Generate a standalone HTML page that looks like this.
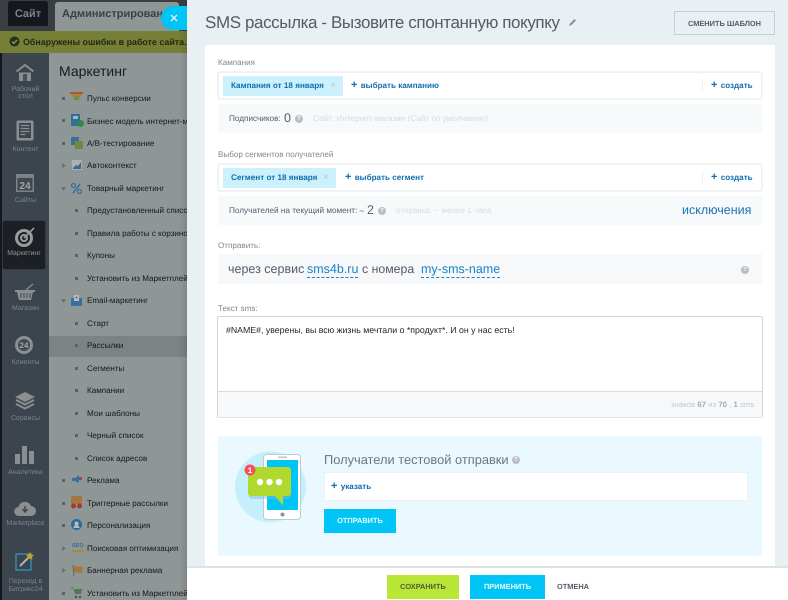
<!DOCTYPE html>
<html lang="ru"><head><meta charset="utf-8"><title>SMS</title>
<style>
html,body{margin:0;padding:0}
body{width:788px;height:600px;overflow:hidden;position:relative;background:#8f9696;font-family:"Liberation Sans","Noto Sans CJK SC",sans-serif;font-size:9px;color:#535c69;text-rendering:geometricPrecision}
.a,.a *{box-sizing:border-box}
.a{position:absolute;white-space:nowrap}
.m{position:absolute;left:87px;margin-top:1px;color:#14181c;font-size:8.1px;line-height:12px;white-space:nowrap;width:100px;overflow:hidden}
.b{position:absolute;width:3px;height:3px;background:#5c6263}
.s{position:absolute;left:2px;width:47px;text-align:center;color:#7d848a;font-size:7px;line-height:8px}
.lbl{color:#80868e;font-size:8.1px;line-height:11px}
.link{color:#0f6fb0;font-weight:bold;font-size:8.1px;line-height:11px}
.lnk2{color:#1681c9;border-bottom:1px dashed #1681c9;font-size:12.5px;line-height:15px}
.box{background:#fff;border:1px solid #eef0f1;border-radius:2px;box-shadow:0 0 0 1px #f3f4f5}
.soft{background:#f7fafb}
.tag{background:#ccf1fd;color:#0f6fb0;font-weight:bold;font-size:8.15px;line-height:19px}
.q{position:absolute;width:8px;height:8px;border-radius:50%;background:#b9bec3;color:#fff;font-size:6px;line-height:8px;text-align:center;font-weight:bold}
.btn{text-align:center;font-weight:bold;font-size:7.4px}
</style></head>
<body>
<!-- top background -->
<div class="a" style="left:0;top:0;width:187px;height:31px;background:#3b3e41"></div>
<div class="a" style="left:8px;top:1px;width:40px;height:25px;background:#14181e;border-radius:3px 3px 0 0;color:#7e8388;font-size:11px;font-weight:bold;line-height:26px;text-align:center">Сайт</div>
<div class="a" style="left:55px;top:2px;width:124px;height:29px;background:#8f9696;border-radius:3px 3px 0 0;color:#3b4044;font-size:11px;font-weight:bold;line-height:25px;padding-left:7px;overflow:hidden">Администрирование</div>
<div class="a" style="left:0;top:31px;width:187px;height:22px;background:#777f36"></div>
<svg class="a" style="left:9px;top:36px" width="11" height="11" viewBox="0 0 11 11"><circle cx="5.500" cy="5.500" r="5" fill="#23331a"/><path d="M3 5.600l1.800 1.800L8 4" fill="none" stroke="#8c9548" stroke-width="1.400"/></svg>
<div class="a" style="left:23px;top:36px;color:#1d2a10;font-size:8.900px;font-weight:bold;line-height:12px;width:164px;overflow:hidden">Обнаружены ошибки в работе сайта.</div>

<!-- sidebar -->
<div class="a" style="left:0;top:53px;width:2px;height:547px;background:#15171a"></div>
<div class="a" style="left:2px;top:53px;width:47px;height:547px;background:#3c444d"></div>
<div class="a" style="left:3px;top:221px;width:42px;height:48px;background:#1c2024;border-radius:2px;box-shadow:0 0 1px #111"></div>

<svg class="a" style="left:15px;top:63px" width="20" height="20" viewBox="0 0 20 20"><path d="M1.500 8.500L10 2l8.500 6.500" fill="none" stroke="#8b8f92" stroke-width="2"/><path d="M4 9.500h12V18H4z" fill="#8b8f92"/><path d="M8 11h4v7H8z" fill="#4b5158"/></svg>
<div class="s" style="top:86px">Рабочий<br><span style="position:relative;top:-1px">стол</span></div>
<svg class="a" style="left:16px;top:120px" width="18" height="21" viewBox="0 0 18 21"><rect x="0.500" y="0.500" width="17" height="20" rx="1.500" fill="#8b8f92"/><rect x="3" y="3" width="12" height="15" fill="#3c444d"/><path d="M4.500 5.500h9M4.500 8.500h9M4.500 11.500h9M4.500 14.500h5" stroke="#8b8f92" stroke-width="1.300"/></svg>
<div class="s" style="top:146px">Контент</div>
<svg class="a" style="left:16px;top:174px" width="18" height="18" viewBox="0 0 18 18"><rect width="18" height="18" fill="#7d8287"/><rect x="1.500" y="4" width="15" height="12.500" fill="#41484f"/><text x="9" y="15" text-anchor="middle" font-family="Liberation Sans" font-size="10" font-weight="bold" fill="#a3a7aa">24</text></svg>
<div class="s" style="top:197px">Сайты</div>
<svg class="a" style="left:14px;top:226px" width="22" height="22" viewBox="0 0 22 22"><circle cx="10" cy="12" r="9" fill="#9a9da0"/><circle cx="10" cy="12" r="6" fill="#1c2024"/><circle cx="10" cy="12" r="4" fill="#9a9da0"/><circle cx="10" cy="12" r="2" fill="#1c2024"/><path d="M10 12L20 2" stroke="#9a9da0" stroke-width="1.600"/></svg>
<div class="s" style="top:250px;left:3px;width:42px;color:#8f9498;font-size:6.900px">Маркетинг</div>
<svg class="a" style="left:14px;top:281px" width="22" height="20" viewBox="0 0 22 20"><path d="M1 9h20v2H1z" fill="#8b8f92"/><path d="M3 11h16l-2 8H5z" fill="#8b8f92"/><path d="M7 12v5M10 12v5M13 12v5M16 12v5" stroke="#3c444d" stroke-width="1"/><path d="M12 9l7-6" stroke="#8b8f92" stroke-width="1.300"/></svg>
<div class="s" style="top:305px">Магазин</div>
<svg class="a" style="left:15px;top:336px" width="18" height="18" viewBox="0 0 18 18"><circle cx="9" cy="9" r="9" fill="#8b8f92"/><circle cx="9" cy="9" r="6" fill="#41484f"/><text x="9" y="12" text-anchor="middle" font-family="Liberation Sans" font-size="8" font-weight="bold" fill="#a3a7aa">24</text></svg>
<div class="s" style="top:359px">Клиенты</div>
<svg class="a" style="left:15px;top:392px" width="20" height="18" viewBox="0 0 20 18"><path d="M10 0l10 5-10 5L0 5z" fill="#8b8f92"/><path d="M1 8l9 4.500L19 8M1 12l9 4.500L19 12" fill="none" stroke="#8b8f92" stroke-width="2"/></svg>
<div class="s" style="top:415px">Сервисы</div>
<svg class="a" style="left:14px;top:445px" width="21" height="20" viewBox="0 0 21 20"><rect x="1" y="9" width="5" height="10" fill="#8b8f92"/><rect x="8" y="1" width="5" height="18" fill="#8b8f92"/><rect x="15" y="6" width="5" height="13" fill="#8b8f92"/></svg>
<div class="s" style="top:469px">Аналитика</div>
<svg class="a" style="left:14px;top:500px" width="22" height="17" viewBox="0 0 22 17"><path d="M5 16a4.500 4.500 0 0 1-.5-9A6.500 6.500 0 0 1 17 6a5 5 0 0 1 0 10z" fill="#8b8f92"/><path d="M11 6v5M8.500 9l2.500 3 2.500-3" fill="none" stroke="#3c444d" stroke-width="1.500"/></svg>
<div class="s" style="top:520px">Marketplace</div>
<svg class="a" style="left:15px;top:551px" width="21" height="21" viewBox="0 0 21 21"><rect x="1" y="3" width="15" height="16" fill="none" stroke="#2b8bb0" stroke-width="1.500"/><path d="M5 15l9-9" stroke="#aeb1b2" stroke-width="2"/><path d="M15 1l1.300 2.500 2.700.5-2 2 .5 2.700-2.500-1.300-2.500 1.300.5-2.700-2-2 2.700-.5z" fill="#c8a22e"/></svg>
<div class="s" style="top:578px">Переход в<br>Битрикс24</div>

<!-- menu -->
<div class="a" style="left:59px;top:63px;color:#171b20;font-size:14px;line-height:17px">Маркетинг</div>
<div class="a" style="left:49px;top:336px;width:138px;height:21px;background:#7b8383"></div>

<i class="b" style="left:62px;top:97px"></i><div class="a" style="left:70px;top:92px;width:13px;height:10px"><svg width="13" height="10" viewBox="0 0 13 10"><path d="M0 0h13v2H0z" fill="#a8553a"/><path d="M1.500 2h10v2h-10z" fill="#a8853a"/><path d="M3 4h7v2H3z" fill="#7f9140"/><path d="M4.500 6h4v2h-4z" fill="#5f8a50"/></svg></div><div class="m" style="top:92px">Пульс конверсии</div>
<i class="b" style="left:62px;top:119px"></i><svg class="a" style="left:71px;top:114px" width="13" height="13" viewBox="0 0 13 13"><rect width="9" height="12" fill="#2f6f9a"/><rect x="2" y="2" width="5" height="3" fill="#9db7c4"/><circle cx="9.500" cy="9.500" r="3.500" fill="#2f8a4a"/></svg><div class="m" style="top:115px">Бизнес модель интернет-м</div>
<i class="b" style="left:62px;top:142px"></i><svg class="a" style="left:71px;top:137px" width="12" height="12" viewBox="0 0 12 12"><rect width="8" height="8" fill="#3a6f98"/><rect x="4" y="4" width="8" height="8" fill="#6f8a3e"/></svg><div class="m" style="top:137px">А/В-тестирование</div>
<svg class="a" style="left:62px;top:163px" width="4" height="5"><path d="M0 0l4 2.500L0 5z" fill="#6a7071"/></svg><svg class="a" style="left:72px;top:160px" width="10" height="10" viewBox="0 0 10 10"><rect width="10" height="10" fill="#aab0b4"/><path d="M1 8l3-3 2 1 3-4v7H1z" fill="#3f6a90"/></svg><div class="m" style="top:159px">Автоконтекст</div>
<svg class="a" style="left:61px;top:187px" width="5" height="4"><path d="M0 0h5L2.500 4z" fill="#6a7071"/></svg><svg class="a" style="left:71px;top:183px" width="11" height="11" viewBox="0 0 11 11"><circle cx="2.500" cy="2.500" r="2" fill="none" stroke="#36709e" stroke-width="1.300"/><circle cx="8.500" cy="8.500" r="2" fill="none" stroke="#36709e" stroke-width="1.300"/><path d="M9 1L2 10" stroke="#36709e" stroke-width="1.500"/></svg><div class="m" style="top:182px">Товарный маркетинг</div>

<i class="b" style="left:75px;top:209px"></i><div class="m" style="top:204px">Предустановленный списо</div>
<i class="b" style="left:75px;top:232px"></i><div class="m" style="top:227px">Правила работы с корзино</div>
<i class="b" style="left:75px;top:254px"></i><div class="m" style="top:249px">Купоны</div>
<i class="b" style="left:75px;top:277px"></i><div class="m" style="top:272px">Установить из Маркетплей</div>
<svg class="a" style="left:61px;top:299px" width="5" height="4"><path d="M0 0h5L2.500 4z" fill="#6a7071"/></svg><svg class="a" style="left:71px;top:295px" width="11" height="11" viewBox="0 0 11 11"><rect y="3" width="11" height="8" fill="#36709e"/><rect x="3" width="5" height="6" fill="#b7bcbc"/><path d="M4.500 2.500h2M5.500 1.500v2" stroke="#a84040"/></svg><div class="m" style="top:294px">Email-маркетинг</div>
<i class="b" style="left:75px;top:322px"></i><div class="m" style="top:317px">Старт</div>
<i class="b" style="left:75px;top:344px"></i><div class="m" style="top:339px">Рассылки</div>
<i class="b" style="left:75px;top:367px"></i><div class="m" style="top:362px">Сегменты</div>
<i class="b" style="left:75px;top:389px"></i><div class="m" style="top:384px">Кампании</div>
<i class="b" style="left:75px;top:412px"></i><div class="m" style="top:407px">Мои шаблоны</div>
<i class="b" style="left:75px;top:434px"></i><div class="m" style="top:429px">Черный список</div>
<i class="b" style="left:75px;top:457px"></i><div class="m" style="top:452px">Список адресов</div>
<i class="b" style="left:62px;top:479px"></i><svg class="a" style="left:71px;top:474px" width="11" height="12" viewBox="0 0 11 12"><path d="M1 4h3l4-3v8L4 7H1z" fill="#36709e"/><rect x="8" y="3" width="3" height="3" fill="#a04a3a"/></svg><div class="m" style="top:474px">Реклама</div>
<i class="b" style="left:62px;top:502px"></i><svg class="a" style="left:70px;top:496px" width="13" height="13" viewBox="0 0 13 13"><rect x="1" y="0" width="11" height="8" fill="#a5763f"/><circle cx="3.500" cy="10" r="2.500" fill="#a03c30"/><circle cx="9.500" cy="10" r="2.500" fill="#a03c30"/></svg><div class="m" style="top:497px">Триггерные рассылки</div>
<i class="b" style="left:62px;top:524px"></i><svg class="a" style="left:71px;top:519px" width="11" height="11" viewBox="0 0 11 11"><circle cx="5.500" cy="5.500" r="5.500" fill="#2f6a9a"/><circle cx="5.500" cy="4.500" r="2" fill="#b7bcbc"/><path d="M2.500 9a3 3 0 0 1 6 0z" fill="#b7bcbc"/></svg><div class="m" style="top:519px">Персонализация</div>
<svg class="a" style="left:62px;top:546px" width="4" height="5"><path d="M0 0l4 2.500L0 5z" fill="#6a7071"/></svg><div class="a" style="left:72px;top:543px;color:#2f6a9a;font-size:5.500px;font-weight:bold;line-height:7px;border-bottom:2px solid #a88a3a">SEO</div><div class="m" style="top:542px">Поисковая оптимизация</div>
<svg class="a" style="left:62px;top:568px" width="4" height="5"><path d="M0 0l4 2.500L0 5z" fill="#6a7071"/></svg><svg class="a" style="left:71px;top:565px" width="12" height="11" viewBox="0 0 12 11"><path d="M2 1l10 1-1 6-8-1z" fill="#a8783a"/><path d="M2 0l1 11" stroke="#5f6a6a"/></svg><div class="m" style="top:564px">Баннерная реклама</div>
<i class="b" style="left:62px;top:592px"></i><svg class="a" style="left:70px;top:587px" width="13" height="12" viewBox="0 0 13 12"><path d="M0 0h3l2 7h6l1-5H4z" fill="#4f7a50"/><circle cx="6" cy="10" r="1.200" fill="#4a5050"/><circle cx="10" cy="10" r="1.200" fill="#4a5050"/></svg><div class="m" style="top:587px">Установить из Маркетплей</div>

<!-- panel -->
<div class="a" style="left:187px;top:0;width:601px;height:600px;background:#e9f0f3;box-shadow:-3px 0 6px rgba(0,0,0,.12)"></div>
<!-- close -->
<div class="a" style="left:161px;top:6px;width:26px;height:24px;background:#00c4f5;border-radius:12px 0 0 12px;color:#fff;text-align:center"><svg style="position:absolute;left:9px;top:8px" width="8" height="8" viewBox="0 0 8 8"><path d="M1 1l6 6M7 1L1 7" stroke="#dff6fd" stroke-width="1.300"/></svg></div>

<div class="a" style="left:205px;top:12px;color:#535c69;font-size:17px;letter-spacing:-.4px;line-height:22px">SMS рассылка - Вызовите спонтанную покупку</div>
<svg class="a" style="left:568px;top:18px" width="9" height="9" viewBox="0 0 9 9"><path d="M1 8l1-2.500L6.500 1 8 2.500 3.500 7z" fill="#8a9096"/></svg>
<div class="a btn" style="left:674px;top:11px;width:101px;height:24px;border:1px solid #c6cdd3;line-height:23px;color:#535c69">СМЕНИТЬ ШАБЛОН</div>

<div class="a" style="left:205px;top:45px;width:570px;height:521px;background:#fff"></div>

<!-- campaign -->
<div class="a lbl" style="left:218px;top:57px">Кампания</div>
<div class="a box" style="left:218px;top:72px;width:544px;height:27px"></div>
<div class="a tag" style="left:223px;top:76px;width:120px;height:20px;padding-left:8px">Кампания от 18 января<span style="position:absolute;left:107px;top:0;color:#a9cfdc;font-weight:normal;font-size:10px">×</span></div>
<div class="a link" style="left:351px;top:80px"><span style="font-size:11px;line-height:11px">+</span> <span style="position:relative;left:1px">выбрать кампанию</span></div>
<div class="a" style="left:702px;top:79px;width:1px;height:13px;background:#eef0f1"></div>
<div class="a link" style="left:711px;top:80px"><span style="font-size:11px;line-height:11px">+</span> <span style="position:relative;left:1px">создать</span></div>
<div class="a soft" style="left:218px;top:104px;width:544px;height:29px"></div>
<div class="a" style="left:229px;top:113px;font-size:8.200px;line-height:12px;color:#535c69">Подписчиков:</div>
<div class="a" style="left:284px;top:111px;font-size:12.500px;line-height:15px;color:#535c69">0</div>
<div class="q" style="left:295px;top:115px">?</div>
<div class="a" style="left:313px;top:113px;font-size:8.200px;line-height:12px;color:#d6dbde">Сайт: Интернет-магазин (Сайт по умолчанию)</div>

<!-- segment -->
<div class="a lbl" style="left:218px;top:149px">Выбор сегментов получателей</div>
<div class="a box" style="left:218px;top:164px;width:544px;height:27px"></div>
<div class="a tag" style="left:223px;top:168px;width:113px;height:20px;padding-left:8px">Сегмент от 18 января<span style="position:absolute;left:100px;top:0;color:#a9cfdc;font-weight:normal;font-size:10px">×</span></div>
<div class="a link" style="left:345px;top:172px"><span style="font-size:11px;line-height:11px">+</span> <span style="position:relative;left:1px">выбрать сегмент</span></div>
<div class="a" style="left:702px;top:171px;width:1px;height:13px;background:#eef0f1"></div>
<div class="a link" style="left:711px;top:172px"><span style="font-size:11px;line-height:11px">+</span> <span style="position:relative;left:1px">создать</span></div>
<div class="a soft" style="left:218px;top:196px;width:544px;height:29px"></div>
<div class="a" style="left:229px;top:205px;font-size:8.200px;line-height:12px;color:#535c69">Получателей на текущий момент:</div>
<div class="a" style="left:359px;top:205px;font-size:9px;line-height:12px;color:#535c69">~</div>
<div class="a" style="left:367px;top:203px;font-size:12.500px;line-height:15px;color:#535c69">2</div>
<div class="q" style="left:378px;top:207px">?</div>
<div class="a" style="left:396px;top:205px;font-size:8.100px;line-height:12px;color:#d6dbde">отправка: ~ менее 1 часа</div>
<div class="a" style="left:682px;top:203px;font-size:12.500px;line-height:15px;color:#1b72ad">исключения</div>

<!-- send -->
<div class="a lbl" style="left:218px;top:240px">Отправить:</div>
<div class="a soft" style="left:218px;top:254px;width:544px;height:30px;background:#f6f8fa"></div>
<div class="a" style="left:228px;top:262px;font-size:12.500px;line-height:15px;color:#535c69">через сервис</div>
<div class="a lnk2" style="left:307px;top:262px">sms4b.ru</div>
<div class="a" style="left:362px;top:262px;font-size:12.300px;line-height:15px;color:#535c69">с номера</div>
<div class="a lnk2" style="left:421px;top:262px">my-sms-name</div>
<div class="q" style="left:741px;top:266px">?</div>

<!-- sms -->
<div class="a lbl" style="left:218px;top:303px">Текст sms:</div>
<div class="a" style="left:217px;top:316px;width:546px;height:102px;background:#fff;border:1px solid #cfd5db;border-bottom-color:#e2e5e8;border-radius:2px"></div>
<div class="a" style="left:218px;top:391px;width:544px;height:26px;background:#f7f8fa;border-top:1px solid #d9dde1"></div>
<div class="a" style="left:226px;top:324px;font-size:8.750px;line-height:12px;color:#1f1f1f">#NAME#, уверены, вы всю жизнь мечтали о *продукт*. И он у нас есть!</div>
<div class="a" style="left:671px;top:399px;font-size:7.800px;line-height:11px;color:#c3c8cc">знаков <b style="color:#a6acb2">67</b> из <b style="color:#a6acb2">70</b> , <b style="color:#a6acb2">1</b> sms</div>

<!-- test -->
<div class="a" style="left:218px;top:436px;width:544px;height:120px;background:#e9f9ff"></div>
<svg class="a" style="left:235px;top:451px" width="72" height="72" viewBox="0 0 72 72">
<circle cx="35.500" cy="36" r="35.500" fill="#c6effc"/>
<rect x="28.500" y="3.500" width="37" height="65" rx="3" fill="#fff" stroke="#c3c9ce" stroke-width="1"/>
<rect x="32" y="9" width="31" height="50" fill="#00c4f5"/>
<rect x="43" y="5.500" width="9" height="1.500" fill="#bfc5c9"/>
<circle cx="47.500" cy="63.500" r="2" fill="#8a9198"/>
<rect x="14" y="19" width="42" height="29" rx="3" fill="#7fb8d0" opacity=".45"/>
<rect x="13" y="16" width="43" height="29" rx="3" fill="#b1d82d"/>
<path d="M40 45l8 9.500V45z" fill="#b1d82d"/>
<circle cx="25" cy="31" r="3.200" fill="#fff"/><circle cx="34.500" cy="31" r="3.200" fill="#fff"/><circle cx="44" cy="31" r="3.200" fill="#fff"/>
<circle cx="15" cy="19" r="5.500" fill="#f2505a"/>
<text x="15" y="22" text-anchor="middle" font-family="Liberation Sans" font-size="8" font-weight="bold" fill="#fff">1</text>
</svg>
<div class="a" style="left:324px;top:452px;font-size:12.850px;line-height:15px;color:#6c757d">Получатели тестовой отправки</div>
<div class="q" style="left:512px;top:456px">?</div>
<div class="a" style="left:324px;top:472px;width:424px;height:29px;background:#fff;border:1px solid #eef0f2"></div>
<div class="a link" style="left:331px;top:481px"><span style="font-size:11px;line-height:11px">+</span> <span style="position:relative;left:1px">указать</span></div>
<div class="a btn" style="left:324px;top:509px;width:72px;height:24px;background:#00c4f5;color:#e8fbff;line-height:24px">ОТПРАВИТЬ</div>

<!-- footer -->
<div class="a" style="left:187px;top:566px;width:601px;height:34px;background:#fff;border-top:2px solid #dfe2e4"></div>
<div class="a btn" style="left:387px;top:575px;width:72px;height:24px;background:#b9e737;color:#535c3a;line-height:24px">СОХРАНИТЬ</div>
<div class="a btn" style="left:470px;top:575px;width:75px;height:24px;background:#00c4f5;color:#eafbff;line-height:24px">ПРИМЕНИТЬ</div>
<div class="a btn" style="left:557px;top:575px;height:24px;line-height:24px;color:#535c69">ОТМЕНА</div>
</body></html>
